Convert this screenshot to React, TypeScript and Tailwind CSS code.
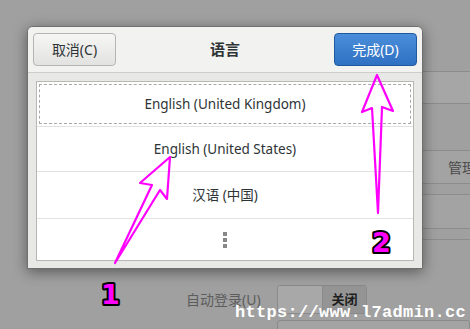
const languages = [
  { name: "English (United Kingdom)", h: "h-[45px]", focused: true },
  { name: "English (United States)", h: "h-[45px]", focused: false },
  { name: "汉语 (中国)", h: "h-[47px]", focused: false },
];

const font = "font-['Noto_Sans','Noto_Sans_CJK_SC',sans-serif]";

const Background = () => (
  <div className="flex flex-col pt-[71px] pl-[186px]">
    <div className="ml-[90px] h-[33px] border-y border-[#8c8c8c] bg-[#a6a6a6]" />
    <div className="h-[46px]" />
    <div className="ml-[90px] h-[34px] border-y border-[#8c8c8c] bg-[#a3a3a3] flex items-center pl-[172px] whitespace-nowrap overflow-hidden text-[14px] text-[#4a4a4a]">
      管理
    </div>
    <div className="h-[10px]" />
    <div className="ml-[90px] h-[35px] border-y border-[#8c8c8c] bg-[#a3a3a3]" />
    <div className="h-[10px]" />
    <div className="ml-[90px] h-[1px] bg-[#8c8c8c]" />
    <div className="h-[45px]" />
    <div className="flex items-center h-[29px]">
      <span className="w-[91px] text-[14px] text-[#5d5d5d]">自动登录(U)</span>
      <div className="flex h-[29px] w-[90px] rounded-[3px] border border-[#8a8a8a] overflow-hidden">
        <div className="w-[45px] bg-[#a8a8a8] border-r border-[#8a8a8a]" />
        <div className="flex-1 bg-[#949494] flex items-center justify-center text-[13px] font-bold text-[#1e1e1e]">
          关闭
        </div>
      </div>
    </div>
    <div className="h-[6px]" />
    <div className="ml-[91px] h-[20px] rounded-t-[3px] border border-[#8a8a8a] bg-[#a3a3a3]" />
  </div>
);

const Dialog = () => (
  <div className="absolute left-[27px] top-[26px] w-[396px] h-[243px] flex flex-col rounded-t-[6px] border border-[#6f6f6f] bg-[#e8e8e7] shadow-[0_3px_14px_rgba(0,0,0,0.45)] overflow-hidden">
    <div className="h-[46px] shrink-0 flex items-center justify-between px-[5px] bg-[#f2f2f1] border-b border-[#cdcdcb]">
      <button className="w-[83px] h-[33px] rounded-[4px] border border-[#b5b5b2] bg-gradient-to-b from-[#f6f6f5] to-[#e2e2e0] text-[14px] text-[#2e3436]">
        取消(C)
      </button>
      <span className="text-[15px] font-bold text-[#2e3436]">语言</span>
      <button className="w-[83px] h-[33px] rounded-[4px] border border-[#1f5a9e] bg-gradient-to-b from-[#4b8fdb] to-[#2f70c2] text-[14px] text-white">
        完成(D)
      </button>
    </div>
    <div className="flex-1 p-[8px] pb-[7px] flex">
      <div className="flex-1 flex flex-col border border-[#b7b7b4] bg-white">
        {languages.map((lang) => (
          <div
            key={lang.name}
            className={`${lang.h} shrink-0 border-b border-[#e2e2e0] p-[2px]`}
          >
            <div
              className={`h-full flex items-center justify-center text-[13.5px] text-[#2e3436] ${
                lang.focused ? "border border-dashed border-[#a8a8a8]" : ""
              }`}
            >
              {lang.name}
            </div>
          </div>
        ))}
        <div className="flex-1 flex flex-col items-center justify-center gap-[2px]">
          <div className="w-[4px] h-[4px] bg-[#888888]" />
          <div className="w-[4px] h-[4px] bg-[#888888]" />
          <div className="w-[4px] h-[4px] bg-[#888888]" />
        </div>
      </div>
    </div>
  </div>
);

const Annotations = () => (
  <svg
    className="absolute inset-0 pointer-events-none"
    width={470}
    height={329}
    viewBox="0 0 470 329"
  >
    <g fill="none" stroke="#ff00ff" strokeWidth={2.2} strokeLinejoin="round" strokeLinecap="round">
      <path d="M115 263 L152 185 L140 183 L170 157 L167 199 L160 190 L115 263" />
      <path d="M378 213 L372 108 L362 112 L377 75 L393 111 L382 107 L378 213" />
    </g>
    <g
      fontFamily="DejaVu Sans, sans-serif"
      fontWeight="bold"
      fontSize={27}
      fill="#ff00ff"
      stroke="#000"
      strokeWidth={4}
      strokeLinejoin="round"
      style={{ paintOrder: "stroke" }}
    >
      <text x={101} y={304}>1</text>
      <text x={372} y={252}>2</text>
    </g>
  </svg>
);

const App = () => {
  return (
    <div className={`relative w-[470px] h-[329px] overflow-hidden bg-[#a0a0a0] ${font}`}>
      <Background />
      <Dialog />
      <Annotations />
      <div className="absolute left-[235px] top-[304px] font-['Liberation_Mono',monospace] font-bold text-[17px] leading-none text-white tracking-[0.3px]">
        https://www.l7admin.cc
      </div>
    </div>
  );
};

export default App;
